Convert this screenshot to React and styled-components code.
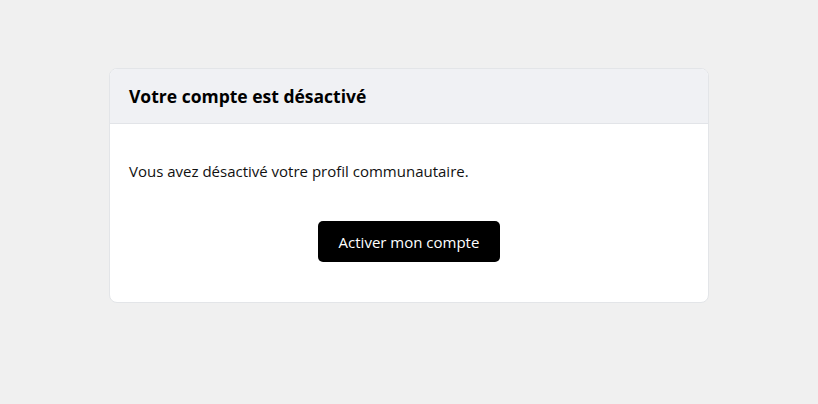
import React from "react";
import styled, { createGlobalStyle } from "styled-components";

const GlobalStyle = createGlobalStyle`
  html, body {
    margin: 0;
    padding: 0;
    background: #f0f0f0;
    font-family: "Open Sans", "Noto Sans", sans-serif;
    color: #111;
  }
`;

const Page = styled.div`
  min-height: 404px;
  padding-top: 68px;
  box-sizing: border-box;
  display: flex;
  justify-content: center;
  align-items: flex-start;
`;

const Card = styled.div`
  width: 600px;
  box-sizing: border-box;
  background: #fff;
  border: 1px solid #e3e5e8;
  border-radius: 8px;
  overflow: hidden;
`;

const Header = styled.div`
  height: 55px;
  box-sizing: border-box;
  display: flex;
  align-items: center;
  padding: 0 19px;
  background: #f0f1f4;
  border-bottom: 1px solid #e2e4e8;
`;

const Title = styled.h2`
  margin: 0;
  font-size: 17.5px;
  font-weight: 700;
  color: #000;
`;

const Body = styled.div`
  padding: 35px 19px 40px;
  display: flex;
  flex-direction: column;
`;

const Text = styled.p`
  margin: 0;
  font-size: 15px;
  line-height: 24px;
  color: #111;
`;

const Actions = styled.div`
  display: flex;
  justify-content: center;
  margin-top: 38px;
`;

const Button = styled.button`
  height: 41px;
  padding: 0 21px;
  border: none;
  border-radius: 5px;
  background: #000;
  color: #fff;
  font-family: inherit;
  font-size: 15px;
  cursor: pointer;
`;

export default function App() {
  return (
    <>
      <GlobalStyle />
      <Page>
        <Card>
          <Header>
            <Title>Votre compte est désactivé</Title>
          </Header>
          <Body>
            <Text>Vous avez désactivé votre profil communautaire.</Text>
            <Actions>
              <Button>Activer mon compte</Button>
            </Actions>
          </Body>
        </Card>
      </Page>
    </>
  );
}
